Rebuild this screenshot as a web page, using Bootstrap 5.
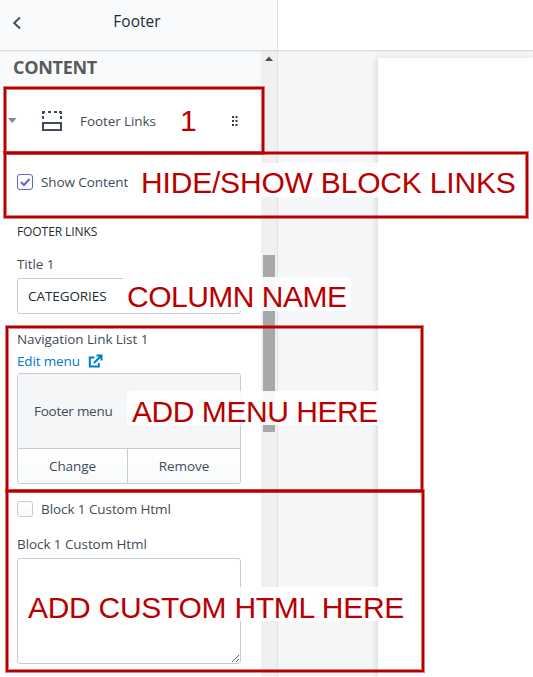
<!DOCTYPE html>
<html lang="en">
<head>
<meta charset="utf-8">
<meta name="viewport" content="width=device-width, initial-scale=1">
<title>Footer</title>
<link rel="stylesheet" href="https://cdn.jsdelivr.net/npm/bootstrap@5.3.0/dist/css/bootstrap.min.css">
<style>
body{font:13.5px/20px "Open Sans","Noto Sans",sans-serif;letter-spacing:-.08px;color:#414b57;width:533px;height:677px;overflow:hidden;background:#f4f6f8}
.side{width:278px;background:#fff;border-right:1px solid #dfe3e8}
.topbar{height:51px;border-bottom:1px solid #d9dcdf;background:#f9fafc;position:relative;z-index:1;box-shadow:0 1px 2px rgba(0,0,0,.05)}
.topbar.blank{background:#fff}
.back{width:34px;padding-left:12px}
.back svg{margin-top:-5px}
.page-title{font-size:15.4px;color:#212b36;padding-right:37px;letter-spacing:.1px;margin-top:-7px}
.panel{width:261px}
.track{width:16px;background:#f0f0f0}
.thumb{width:12px;height:177px;background:#a8a8a8;margin:190px 0 0 2px}
.section-head{height:39px;background:#f9fafc;border-bottom:1px solid #e6e9ed;padding:5px 0 0 13px;font-weight:700;font-size:18px;letter-spacing:-.3px;line-height:23px;color:#5a5a5a}
.block-row{height:62px;border-bottom:1px solid #dfe3e8}
.block-icons{margin-right:-181px}
.fields{padding:0 20px 0 17px}
.fields>*{white-space:nowrap}
.tick{width:16px;height:16px;border:1px solid #c4cdd5;border-radius:3px;background:linear-gradient(#fff,#f9fafb);flex:none}
.tick.on{border-color:#5c6ac4}
.caps{font-size:12px;color:#212b36;line-height:16px;margin-top:32px}
.box{border:1px solid #c4cdd5;border-radius:3px;background:#fff}
.gap-s{margin-top:4px}
.gap-xs{margin-top:2px}
.gap-m{margin-top:14px}
.gap-l{margin-top:15px}
.title-input{height:36px;padding:7px 10px;color:#212b36}
.menu-pick{height:111px}
.menu-name{height:75px;background:#f4f6f8;padding-left:16px;border-bottom:1px solid #c4cdd5;letter-spacing:-.25px}
.menu-btn{background:linear-gradient(#fff,#f9fafb);height:34px}
.menu-btn:first-child{width:110px;border-right:1px solid #c4cdd5}
.area{height:106px}
.link{color:#007ace;letter-spacing:-.15px}
.sheet{background:#fff;margin:7px 0 0 100px;box-shadow:-1px 1px 6px rgba(33,43,54,.16)}
.frame{position:absolute;border:2px solid #b80000;box-shadow:0 0 0 1px rgba(184,0,0,.5),inset 0 0 0 1px rgba(184,0,0,.5)}
.note{position:absolute;height:34px;background:rgba(255,255,255,.9);border-radius:3px;color:#b80000;font:30px/39px "Liberation Sans",Arial,sans-serif;letter-spacing:-.18px;padding-left:5px;white-space:nowrap}
.f1{left:4px;top:87px;width:260px;height:67px}
.f2{left:4px;top:152px;width:524px;height:66px}
.f3{left:6px;top:326px;width:417px;height:166px}
.f4{left:6px;top:490px;width:418px;height:182px}
.n1{left:175px;top:101px}
.n2{left:136px;top:163px;width:386px}
.n3{left:122px;top:277px;width:229px;letter-spacing:-.5px}
.n4{left:127px;top:391px;width:256px;line-height:41px;letter-spacing:-.45px}
.n5{left:23px;top:587px;width:386px;line-height:41px;letter-spacing:-.28px}
</style>
</head>
<body class="position-relative">
<div class="d-flex h-100">
  <aside class="side d-flex flex-column flex-shrink-0">
    <header class="topbar d-flex align-items-center flex-shrink-0">
      <div class="back"><svg class="d-block" width="10" height="14" viewBox="0 0 10 14"><path d="M8 1.500 2.200 7 8 12.500" fill="none" stroke="#46505e" stroke-width="2"/></svg></div>
      <div class="page-title flex-grow-1 text-center">Footer</div>
    </header>
    <div class="d-flex flex-grow-1">
      <div class="panel">
        <div class="section-head">CONTENT</div>
        <div class="block-row d-flex align-items-center">
          <svg width="261" height="61" viewBox="0 90 261 61" class="block-icons flex-shrink-0"><path d="M8 118h8.500l-4.250 5z" fill="#798c9c"/><g fill="none" stroke="#414b5b" stroke-width="2"><path d="M43 114v-2h2m3 0h3m3 0h3m2 0h2v2M43 116v3M61 116v3"/><path d="M43 123h18v7H43z"/></g><g fill="#303a46"><path d="M232 116h2v2h-2zM235.500 116h2v2h-2zM232 120h2v2h-2zM235.500 120h2v2h-2zM232 124h2v2h-2zM235.500 124h2v2h-2z"/></g></svg>
          <span>Footer Links</span>
        </div>
        <div class="fields">
          <div class="d-flex align-items-center gap-2 pt-3 mt-1"><span class="tick on d-flex"><svg width="14" height="14" viewBox="0 0 14 14"><path d="m3 7 3 3 5.500-6" fill="none" stroke="#5c6ac4" stroke-width="2"/></svg></span><span>Show Content</span></div>
          <div class="caps">FOOTER LINKS</div>
          <div class="gap-m">Title 1</div>
          <div class="box title-input gap-s">CATEGORIES</div>
          <div class="gap-l">Navigation Link List 1</div>
          <div class="link gap-xs d-flex align-items-center"><span>Edit menu</span><svg class="ms-2" width="15" height="15" viewBox="0 0 15 15"><path d="M6.500 3.500H1.800v9h9V9M8.500 1.500h5v5M13 2 6 9" fill="none" stroke="#007ace" stroke-width="2"/></svg></div>
          <div class="box menu-pick gap-xs overflow-hidden">
            <div class="menu-name d-flex align-items-center">Footer menu</div>
            <div class="d-flex"><div class="menu-btn d-flex align-items-center justify-content-center">Change</div><div class="menu-btn flex-grow-1 d-flex align-items-center justify-content-center">Remove</div></div>
          </div>
          <div class="gap-l d-flex align-items-center gap-2"><span class="tick"></span><span>Block 1 Custom Html</span></div>
          <div class="gap-l">Block 1 Custom Html</div>
          <div class="box area gap-s d-flex align-items-end justify-content-end"><svg width="9" height="9" viewBox="0 0 9 9"><path d="M1 8 8 1M5 8l3-3" stroke="#666" stroke-width="1"/></svg></div>
        </div>
      </div>
      <div class="track"><svg class="d-block" width="16" height="14" viewBox="0 0 16 14"><path d="M4 10h8L8 5.500z" fill="#505050"/></svg><div class="thumb"></div></div>
    </div>
  </aside>
  <main class="flex-grow-1 d-flex flex-column overflow-hidden">
    <div class="topbar blank flex-shrink-0"></div>
    <div class="sheet flex-grow-1"></div>
  </main>
</div>
<div class="frame f1"></div><div class="frame f2"></div><div class="frame f3"></div><div class="frame f4"></div>
<div class="note n1">1</div>
<div class="note n2">HIDE/SHOW BLOCK LINKS</div>
<div class="note n3">COLUMN NAME</div>
<div class="note n4">ADD MENU HERE</div>
<div class="note n5">ADD CUSTOM HTML HERE</div>
<script src="https://cdn.jsdelivr.net/npm/bootstrap@5.3.0/dist/js/bootstrap.bundle.min.js"></script>
</body>
</html>
